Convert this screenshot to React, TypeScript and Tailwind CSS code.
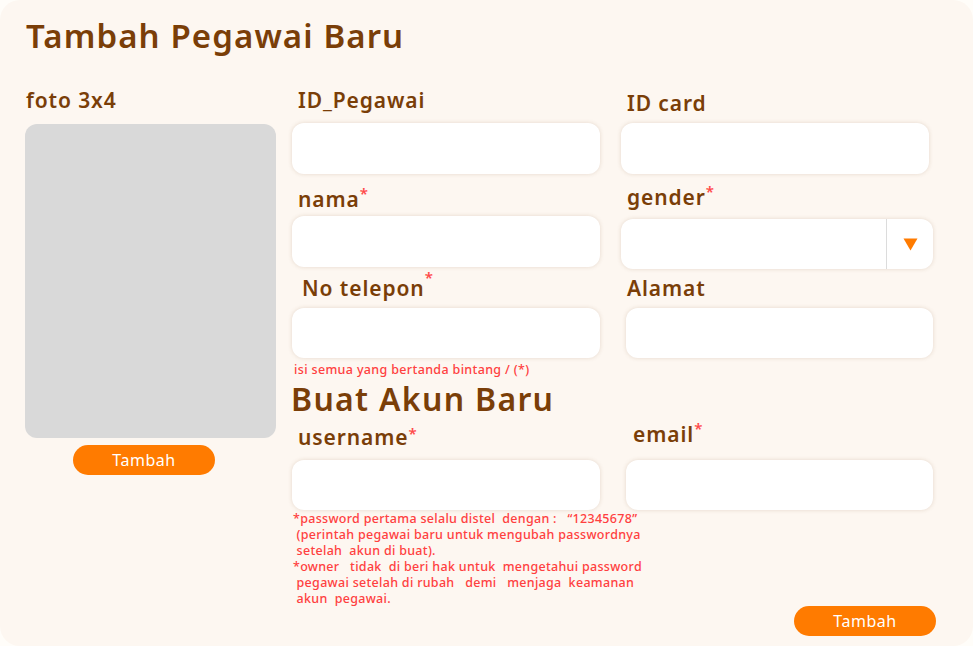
import React from "react";

const Star = ({ cls }: { cls: string }) => (
  <span className={`relative text-[#ff4a4a] text-[15px] leading-none tracking-normal ${cls}`}>*</span>
);

const Input = ({ cls }: { cls: string }) => (
  <div
    className={`bg-white rounded-[12px] shadow-[0_0_4px_rgba(120,80,40,0.18)] ${cls}`}
  />
);

const Label = ({ cls, children }: { cls: string; children: React.ReactNode }) => (
  <div className={`text-[21px] leading-[26px] font-semibold tracking-[0.9px] whitespace-nowrap ${cls}`}>
    {children}
  </div>
);

export default function App() {
  return (
    <div className="w-[973px] h-[646px] bg-[#fffdf9]">
      <div
        className="w-full h-full rounded-[20px] bg-[#fdf7f1] flex flex-col text-[#7a3e08]"
        style={{ fontFamily: "'Noto Sans', sans-serif" }}
      >
        <h1 className="pl-[26px] pt-[16px] text-[33px] leading-[40px] font-semibold tracking-[1.1px]">
          Tambah Pegawai Baru
        </h1>
        <div className="flex mt-[31px]">
          {/* left column */}
          <div className="w-[251px] ml-[25px] flex flex-col">
            <Label cls="pl-[1px]">foto 3x4</Label>
            <div className="mt-[11px] h-[314px] rounded-[12px] bg-[#d9d9d9]" />
            <button className="mt-[7px] ml-[48px] w-[142px] h-[30px] rounded-full bg-[#ff7b00] text-white text-[16px] font-normal tracking-[0.5px]">
              Tambah
            </button>
          </div>

          {/* form area */}
          <div className="ml-[16px] w-[644px] flex flex-col">
            {/* row 1 */}
            <div className="grid grid-cols-[308px_312px] gap-x-[21px]">
              <div className="flex flex-col">
                <Label cls="pl-[6px]">ID_Pegawai</Label>
                <Input cls="mt-[10px] h-[51px]" />
              </div>
              <div className="flex flex-col mt-[3px]">
                <Label cls="pl-[6px]">ID card</Label>
                <Input cls="mt-[7px] h-[51px] w-[308px]" />
              </div>
            </div>

            {/* row 2 */}
            <div className="grid grid-cols-[308px_312px] gap-x-[21px]">
              <div className="flex flex-col mt-[12px]">
                <Label cls="pl-[6px]">
                  nama<Star cls="-top-[8px]" />
                </Label>
                <Input cls="mt-[4px] h-[51px]" />
              </div>
              <div className="flex flex-col mt-[10px]">
                <Label cls="pl-[6px]">
                  gender<Star cls="-top-[8px]" />
                </Label>
                <div className="mt-[9px] h-[50px] w-[312px] bg-white rounded-[12px] shadow-[0_0_4px_rgba(120,80,40,0.18)] flex justify-end">
                  <div className="w-[47px] h-full border-l border-[#dcdcdc] flex items-center justify-center">
                    <svg width="15" height="13" viewBox="0 0 15 13">
                      <path d="M0.5 0.5 H14.5 L7.5 12.5 Z" fill="#ff7b00" />
                    </svg>
                  </div>
                </div>
              </div>
            </div>

            {/* row 3 */}
            <div className="grid grid-cols-[308px_312px] gap-x-[21px]">
              <div className="flex flex-col mt-[6px]">
                <Label cls="pl-[10px]">
                  No telepon<Star cls="-top-[13px]" />
                </Label>
                <Input cls="mt-[7px] h-[50px]" />
              </div>
              <div className="flex flex-col mt-[6px] pl-[5px]">
                <Label cls="pl-[1px]">Alamat</Label>
                <Input cls="mt-[7px] h-[50px] w-[307px]" />
              </div>
            </div>

            <div className="mt-[5px] pl-[2px] text-[12.5px] leading-[14px] text-[#ff4040] font-medium tracking-[0.35px]">
              isi semua yang bertanda bintang / (*)
            </div>

            <div className="mt-[7px] -ml-[1px] text-[32px] leading-[30px] font-semibold tracking-[1.3px]">
              Buat Akun Baru
            </div>

            {/* row 4 */}
            <div className="grid grid-cols-[308px_312px] gap-x-[21px]">
              <div className="flex flex-col mt-[10px]">
                <Label cls="pl-[6px]">
                  username<Star cls="-top-[6px]" />
                </Label>
                <Input cls="mt-[10px] h-[50px]" />
              </div>
              <div className="flex flex-col mt-[7px] pl-[5px]">
                <Label cls="pl-[7px]">
                  email<Star cls="-top-[8px]" />
                </Label>
                <Input cls="mt-[13px] h-[50px] w-[307px]" />
              </div>
            </div>

            <div className="mt-[1px] pl-[1px] w-[370px] text-[12.5px] leading-[16px] text-[#ff4040] font-medium tracking-[0.3px] whitespace-pre">
              {"*password pertama selalu distel  dengan :   “12345678”\n (perintah pegawai baru untuk mengubah passwordnya\n setelah  akun di buat).\n*owner   tidak  di beri hak untuk  mengetahui password\n pegawai setelah di rubah   demi   menjaga  keamanan\n akun  pegawai."}
            </div>

            <button className="-mt-[1px] ml-[502px] w-[142px] h-[30px] rounded-full bg-[#ff7b00] text-white text-[16px] font-normal tracking-[0.5px]">
              Tambah
            </button>
          </div>
        </div>
      </div>
    </div>
  );
}
